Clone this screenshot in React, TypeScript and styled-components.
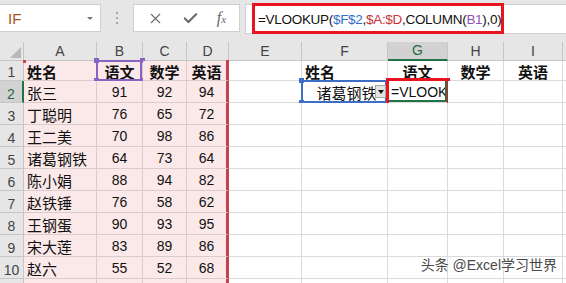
import React from 'react'
import styled, { createGlobalStyle, css } from 'styled-components'
import { X, Check } from 'lucide-react'

const GlobalStyle = createGlobalStyle`
  html, body { margin: 0; padding: 0; background: #fff; }
  body {
    width: 566px;
    height: 283px;
    overflow: hidden;
    font-family: "Liberation Sans", "Noto Sans CJK SC", sans-serif;
  }
`

const Page = styled.div`
  position: relative;
  width: 566px;
  height: 283px;
  overflow: hidden;
  background: #fff;
`

// ---------- formula bar ----------
const Toolbar = styled.div`
  display: flex;
  align-items: flex-start;
  height: 42px;
  padding-top: 4px;
  box-sizing: border-box;
  background: #e6e6e6;
`

const NameBox = styled.div`
  display: flex;
  align-items: center;
  justify-content: space-between;
  width: 101px;
  height: 28px;
  box-sizing: border-box;
  padding: 0 7px 0 8px;
  background: #fff;
  border: 1px solid #d0d0d0;
  border-left: none;
  font-size: 15px;
  color: #a8541c;
`

const Caret = styled.span`
  width: 0;
  height: 0;
  border-left: 3px solid transparent;
  border-right: 3px solid transparent;
  border-top: 3px solid #777;
`

const Grip = styled.div`
  display: flex;
  flex-direction: column;
  align-items: center;
  justify-content: center;
  gap: 3px;
  width: 32px;
  height: 28px;
`

const Dot = styled.span`
  width: 2px;
  height: 2px;
  background: #a6a6a6;
`

const FxButtons = styled.div`
  display: flex;
  align-items: center;
  justify-content: space-around;
  width: 107px;
  height: 28px;
  box-sizing: border-box;
  padding: 0 4px;
  background: #fff;
  border: 1px solid #d0d0d0;
  color: #6b6b6b;
`

const Fx = styled.span`
  font-family: "Liberation Serif", serif;
  font-style: italic;
  font-size: 16px;
  color: #666;
  sub { font-size: 11px; vertical-align: 0; }
`

const FormulaBox = styled.div`
  position: relative;
  flex: 1;
  display: flex;
  align-items: center;
  height: 28px;
  margin-left: 5px;
  padding-left: 12px;
  background: #fff;
  border: 1px solid #d0d0d0;
  border-right: none;
  font-size: 13.5px;
  letter-spacing: -0.3px;
  color: #111;
  white-space: nowrap;
`

const Ref = styled.span<{ $c: string }>`
  color: ${p => p.$c};
`

const Annotation = styled.div`
  position: absolute;
  left: 6px;
  top: -2px;
  width: 252px;
  height: 31px;
  box-sizing: border-box;
  border: 3px solid #e8141f;
`

// ---------- sheet ----------
const Sheet = styled.div`
  display: grid;
  grid-template-columns: 24px 73px 46px 44px 42px 73px 86px 60px 56px 59px 1fr;
  grid-template-rows: 19px 20px repeat(10, 22px);
`

const HeadCell = styled.div<{ $sel?: boolean; $row?: boolean }>`
  display: flex;
  align-items: flex-end;
  justify-content: center;
  box-sizing: border-box;
  padding-bottom: ${p => (p.$row ? '0' : '1px')};
  background: ${p => (p.$sel ? '#d2d2d2' : '#e6e6e6')};
  border-right: 1px solid #c6c6c6;
  border-bottom: 1px solid #c6c6c6;
  font-size: 14px;
  color: ${p => (p.$sel ? '#1e6b3d' : '#444')};
  ${p => p.$sel && !p.$row && css`border-bottom: 2px solid #217346;`}
  ${p => p.$sel && p.$row && css`border-right: 2px solid #217346;`}
`

const Corner = styled(HeadCell)`
  position: relative;
  &::after {
    content: '';
    position: absolute;
    right: 2px;
    bottom: 2px;
    border-left: 11px solid transparent;
    border-bottom: 11px solid #b9b9b9;
  }
`

const Cell = styled.div<{ $pink?: boolean; $bold?: boolean; $center?: boolean; $num?: boolean; $red?: boolean }>`
  position: relative;
  display: flex;
  align-items: center;
  justify-content: ${p => (p.$center ? 'center' : 'flex-start')};
  box-sizing: border-box;
  padding: 1px 0 0 3px;
  ${p => p.$center && css`padding-left: 0;`}
  background: ${p => (p.$pink ? '#fbe9ea' : '#fff')};
  border-right: 1px solid ${p => (p.$pink ? '#dacbcc' : '#dadada')};
  border-bottom: 1px solid ${p => (p.$pink ? '#dacbcc' : '#dadada')};
  ${p => p.$red && css`border-right: 3px solid #c9424b;`}
  font-size: ${p => (p.$num ? '14px' : '15px')};
  font-weight: ${p => (p.$bold ? 700 : 400)};
  color: #111;
  white-space: nowrap;
`

const RefFrame = styled.div<{ $c: string }>`
  position: absolute;
  inset: -1px 0 -1px -1px;
  border: 2px solid ${p => p.$c};
  pointer-events: none;
`

const Handle = styled.span<{ $c: string; $x: 'l' | 'r'; $y: 't' | 'b' }>`
  position: absolute;
  width: 5px;
  height: 5px;
  background: ${p => p.$c};
  ${p => (p.$x === 'l' ? 'left: -3px;' : 'right: -3px;')}
  ${p => (p.$y === 't' ? 'top: -3px;' : 'bottom: -3px;')}
`

const RedMark = styled.span<{ $side: 'l' | 'r' }>`
  position: absolute;
  top: -1px;
  ${p => (p.$side === 'l' ? 'left: -1px; width: 3px; height: 3px;' : 'right: -3px; width: 3px; height: 4px;')}
  background: #c9424b;
`

const DropBtn = styled.span`
  position: absolute;
  right: 1px;
  top: 4px;
  width: 11px;
  height: 13px;
  box-sizing: border-box;
  background: #e3e3e3;
  border: 1px solid #a8a8a8;
  display: flex;
  align-items: center;
  justify-content: center;
  &::after {
    content: '';
    border-left: 3px solid transparent;
    border-right: 3px solid transparent;
    border-top: 4px solid #111;
  }
`

const ActiveCell = styled(Cell)`
  overflow: visible;
  padding-left: 3px;
  box-shadow: inset -2px -2px 0 #217346;
`

const Clip = styled.span`
  display: block;
  width: 54px;
  overflow: hidden;
`

const RedBox = styled.div`
  position: absolute;
  left: -2px;
  top: -3px;
  right: -3px;
  bottom: -4px;
  border: 3px solid #e8141f;
  pointer-events: none;
`

const Watermark = styled.div`
  position: absolute;
  right: 9px;
  bottom: 9px;
  font-family: "Liberation Sans", "Noto Sans CJK SC", sans-serif;
  font-size: 14px;
  color: #4a4a4a;
  text-shadow: 0 0 2px #fff, 0 0 2px #fff;
`

const data: [string, number, number, number][] = [
  ['张三', 91, 92, 94],
  ['丁聪明', 76, 65, 72],
  ['王二美', 70, 98, 86],
  ['诸葛钢铁', 64, 73, 64],
  ['陈小娟', 88, 94, 82],
  ['赵铁锤', 76, 58, 62],
  ['王钢蛋', 90, 93, 95],
  ['宋大莲', 83, 89, 86],
  ['赵六', 55, 52, 68],
]

const letters = ['A', 'B', 'C', 'D', 'E', 'F', 'G', 'H', 'I', '']

const Blank = () => <Cell />

export default function App() {
  return (
    <Page>
      <GlobalStyle />
      <Toolbar>
        <NameBox>
          <span>IF</span>
          <Caret />
        </NameBox>
        <Grip>
          <Dot />
          <Dot />
          <Dot />
        </Grip>
        <FxButtons>
          <X size={17} strokeWidth={1.6} />
          <Check size={17} strokeWidth={3} />
          <Fx>
            f<sub>x</sub>
          </Fx>
        </FxButtons>
        <FormulaBox>
          =VLOOKUP(<Ref $c="#2f6fc8">$F$2</Ref>,<Ref $c="#c8323c">$A:$D</Ref>,COLUMN(
          <Ref $c="#8a55b8">B1</Ref>),0)
          <Annotation />
        </FormulaBox>
      </Toolbar>

      <Sheet>
        <Corner />
        {letters.map((l, i) => (
          <HeadCell key={i} $sel={l === 'G'}>
            {l}
          </HeadCell>
        ))}

        {/* row 1 */}
        <HeadCell $row>1</HeadCell>
        <Cell $pink $bold>
          姓名
          <RedMark $side="l" />
        </Cell>
        <Cell $pink $bold $center>
          语文
          <RefFrame $c="#8a62c2" />
          <Handle $c="#8a62c2" $x="l" $y="t" />
          <Handle $c="#8a62c2" $x="r" $y="t" />
          <Handle $c="#8a62c2" $x="l" $y="b" />
          <Handle $c="#8a62c2" $x="r" $y="b" />
        </Cell>
        <Cell $pink $bold $center>
          数学
        </Cell>
        <Cell $pink $bold $center $red>
          英语
          <RedMark $side="r" />
        </Cell>
        <Blank />
        <Cell $bold>姓名</Cell>
        <Cell $bold $center>
          语文
        </Cell>
        <Cell $bold $center>
          数学
        </Cell>
        <Cell $bold $center>
          英语
        </Cell>
        <Blank />

        {data.map(([name, a, b, c], i) => (
          <React.Fragment key={name}>
            <HeadCell $row $sel={i === 0}>
              {i + 2}
            </HeadCell>
            <Cell $pink>{name}</Cell>
            <Cell $pink $center $num>
              {a}
            </Cell>
            <Cell $pink $center $num>
              {b}
            </Cell>
            <Cell $pink $center $num $red>
              {c}
            </Cell>
            <Blank />
            {i === 0 ? (
              <>
                <Cell $center>
                  <span style={{ marginLeft: 4 }}>诸葛钢铁</span>
                  <RefFrame $c="#3d6fc6" />
                  <Handle $c="#3d6fc6" $x="l" $y="t" />
                  <Handle $c="#3d6fc6" $x="l" $y="b" />
                  <DropBtn />
                </Cell>
                <ActiveCell $num>
                  <Clip>=VLOOK</Clip>
                  <RedBox />
                </ActiveCell>
              </>
            ) : (
              <>
                <Blank />
                <Blank />
              </>
            )}
            <Blank />
            <Blank />
            <Blank />
          </React.Fragment>
        ))}

        {/* row 11 */}
        <HeadCell $row>11</HeadCell>
        <Cell $pink />
        <Cell $pink />
        <Cell $pink />
        <Cell $pink $red />
        {[0, 1, 2, 3, 4, 5].map(k => (
          <Blank key={k} />
        ))}
      </Sheet>

      <Watermark>头条 @Excel学习世界</Watermark>
    </Page>
  )
}
